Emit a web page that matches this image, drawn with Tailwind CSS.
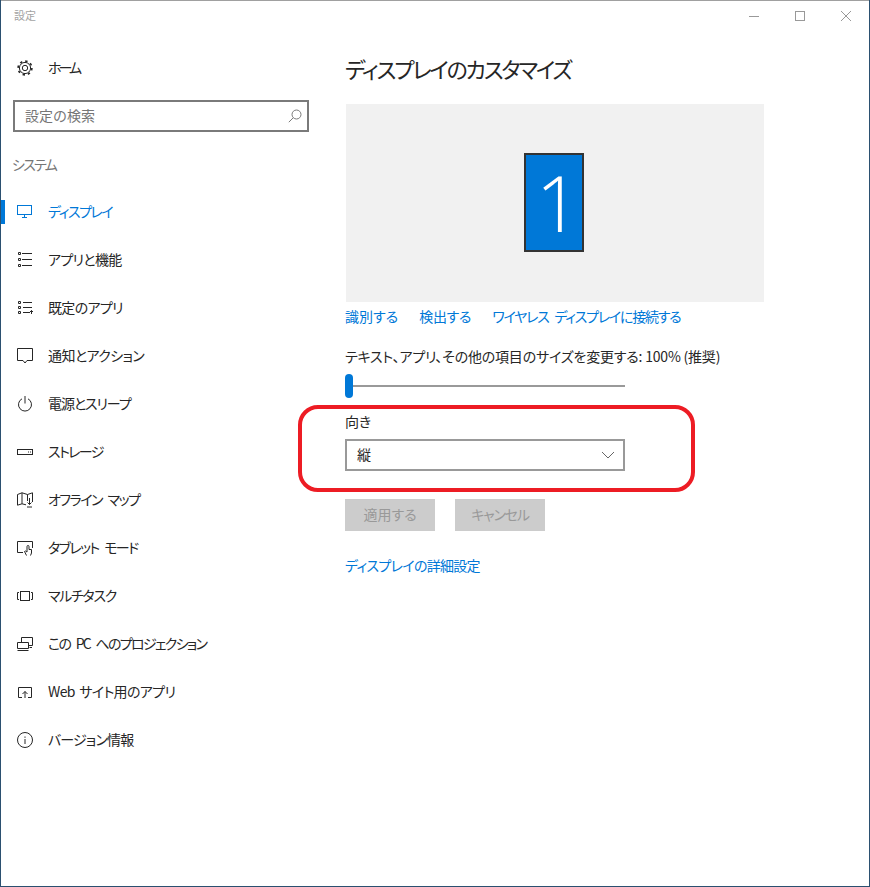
<!DOCTYPE html>
<html lang="ja">
<head>
  <meta charset="UTF-8" />
  <meta name="viewport" content="width=device-width, initial-scale=1.0" />
  <title>設定</title>
  <script src="https://cdn.jsdelivr.net/npm/@tailwindcss/browser@4"></script>
</head>
<body class="bg-white text-[#262626] font-['Noto_Sans_CJK_JP','Noto_Sans',sans-serif] [font-feature-settings:'palt'] text-[14px]">
  <div class="relative w-[870px] h-[887px] overflow-hidden border-x border-b border-[#2b5070] border-t-0">
    <div class="absolute top-0 inset-x-0 h-px bg-[#a0a0a0]"></div>

    <!-- Title bar -->
    <header class="h-8 flex items-start justify-between">
      <span class="ml-[13px] mt-[6px] text-[11px] leading-[18px] text-[#a3a3a3]">設定</span>
      <div class="flex text-[#999]">
        <div class="w-[46px] h-8 flex items-center justify-center">
          <svg width="10" height="10" viewBox="0 0 10 10" fill="none" stroke="currentColor"><path d="M0 5.5H10"/></svg>
        </div>
        <div class="w-[46px] h-8 flex items-center justify-center">
          <svg width="10" height="10" viewBox="0 0 10 10" fill="none" stroke="currentColor"><rect x=".5" y=".5" width="9" height="9"/></svg>
        </div>
        <div class="w-[46px] h-8 flex items-center justify-center">
          <svg width="10" height="10" viewBox="0 0 10 10" fill="none" stroke="currentColor"><path d="M0 0L10 10M10 0L0 10"/></svg>
        </div>
      </div>
    </header>

    <div class="flex">
      <!-- Sidebar -->
      <aside class="w-[344px] shrink-0">
        <a class="mt-3 h-12 flex items-center">
          <svg class="ml-4 mr-[15px]" width="16" height="16" viewBox="0 0 16 16" fill="none" stroke="currentColor"><circle cx="8" cy="8" r="2.7"/><circle cx="8" cy="8" r="5.6"/><circle cx="8" cy="8" r="6.9" stroke-width="1.6" stroke-dasharray="2.4 3.02"/></svg>
          <span class="pb-[2px] tracking-[-3px]">ホーム</span>
        </a>

        <div class="ml-3 mt-2 w-[296px] h-8 border-2 border-[#7a7a7a] flex items-center justify-between pl-[10px] pr-[5px]">
          <span class="pb-[2px] text-[#767676] [font-feature-settings:normal]">設定の検索</span>
          <svg width="14" height="14" viewBox="0 0 14 14" fill="none" stroke="#7a7a7a"><circle cx="8.5" cy="5.5" r="4.5"/><path d="M5.2 8.8L.8 13.2"/></svg>
        </div>

        <div class="h-14 pt-[21px] pl-[11px] leading-[22px] text-[#767676] tracking-[-1.7px]">システム</div>

        <nav>
          <a class="relative h-12 flex items-center text-[#0078d7]">
            <span class="absolute left-0 top-3 w-1 h-6 bg-[#0078d7]"></span>
            <svg class="ml-4 mr-[15px]" width="16" height="16" viewBox="0 0 16 16" fill="none" stroke="currentColor"><rect x=".5" y="1.5" width="14" height="9"/><path d="M7.5 10.5V13M5 13.5H10"/></svg>
            <span class="pb-[2px] tracking-[-1.5px]">ディスプレイ</span>
          </a>
          <a class="h-12 flex items-center">
            <svg class="ml-4 mr-[15px]" width="16" height="16" viewBox="0 0 16 16" fill="none" stroke="currentColor"><path d="M1.5 .5h2v2h-2zM1.5 6.5h2v2h-2zM1.5 12.5h2v2h-2zM5 1.5H15M5 7.5H15M5 13.5H15"/></svg>
            <span class="pb-[2px] tracking-[-.7px]">アプリと機能</span>
          </a>
          <a class="h-12 flex items-center">
            <svg class="ml-4 mr-[15px]" width="16" height="16" viewBox="0 0 16 16" fill="none" stroke="currentColor"><path d="M1.5 1.5h2v2h-2zM1.5 6.5h2v2h-2zM1.5 11.5h2v2h-2zM6 2.5H15M6 7.5H15M6 12.5H13M14.5 14V10.5M13 12L14.5 10.5L16 12"/></svg>
            <span class="pb-[2px] tracking-[-.7px]">既定のアプリ</span>
          </a>
          <a class="h-12 flex items-center">
            <svg class="ml-4 mr-[15px]" width="16" height="16" viewBox="0 0 16 16" fill="none" stroke="currentColor"><path d="M.5 .5H15.5V12.5H10L8 15L6 12.5H.5Z"/></svg>
            <span class="pb-[2px] tracking-[-.6px]">通知とアクション</span>
          </a>
          <a class="h-12 flex items-center">
            <svg class="ml-4 mr-[15px]" width="16" height="16" viewBox="0 0 16 16" fill="none" stroke="currentColor"><path d="M5 2.8A6.5 6.5 0 1 0 11 2.8M8 0V7.5"/></svg>
            <span class="pb-[2px] tracking-[-1.1px]">電源とスリープ</span>
          </a>
          <a class="h-12 flex items-center">
            <svg class="ml-4 mr-[15px]" width="16" height="16" viewBox="0 0 16 16" fill="none" stroke="currentColor"><rect x=".5" y="5.5" width="15" height="5"/><path d="M11 8H12M13 8H14"/></svg>
            <span class="pb-[2px] tracking-[-1.6px]">ストレージ</span>
          </a>
          <a class="h-12 flex items-center">
            <svg class="ml-4 mr-[15px]" width="16" height="16" viewBox="0 0 16 16" fill="none" stroke="currentColor"><path d="M.5 2.5L5 .8L10.5 2.5L15.5 .8V10M.5 2.5V13.2L5 11.8L9 12.8M5 .8V11.8M10.5 2.5V9M12.5 6V12.5M10.5 10.5L12.5 12.5L14.5 10.5M10 15H15"/></svg>
            <span class="pb-[2px] tracking-[-1.5px] [word-spacing:4px]">オフライン マップ</span>
          </a>
          <a class="h-12 flex items-center">
            <svg class="ml-4 mr-[15px]" width="16" height="16" viewBox="0 0 16 16" fill="none" stroke="currentColor"><path d="M6 12.5H.5V1.5H15.5V8M9.5 15.5L7.5 11.5L8.5 11L10 12V6.5A1 1 0 0 1 12 6.5V9.5H14.5V13L13.5 15.5"/></svg>
            <span class="pb-[2px] tracking-[-1.6px] [word-spacing:4px]">タブレット モード</span>
          </a>
          <a class="h-12 flex items-center">
            <svg class="ml-4 mr-[15px]" width="16" height="16" viewBox="0 0 16 16" fill="none" stroke="currentColor"><rect x="3.5" y="3.5" width="9" height="9"/><path d="M2 4.5H.5V11.5H2M14 4.5H15.5V11.5H14"/></svg>
            <span class="pb-[2px] tracking-[-1.3px]">マルチタスク</span>
          </a>
          <a class="h-12 flex items-center">
            <svg class="ml-4 mr-[15px]" width="16" height="16" viewBox="0 0 16 16" fill="none" stroke="currentColor"><path d="M4.5 6V1.5H15.5V9.5H11.5M.5 12.5V6.5H11.5V12.5ZM.5 14.5H11.5M12.5 11.5H15"/></svg>
            <span class="pb-[2px] tracking-[-1.7px] [word-spacing:4px]">この PC へのプロジェクション</span>
          </a>
          <a class="h-12 flex items-center">
            <svg class="ml-4 mr-[15px]" width="16" height="16" viewBox="0 0 16 16" fill="none" stroke="currentColor"><path d="M5 13.5H1.5V3.5H14.5V13.5H11M8 14V7.5M5.5 10L8 7.5L10.5 10"/></svg>
            <span class="pb-[2px] tracking-[-.65px] [word-spacing:2px]">Web サイト用のアプリ</span>
          </a>
          <a class="h-12 flex items-center">
            <svg class="ml-4 mr-[15px]" width="16" height="16" viewBox="0 0 16 16" fill="none" stroke="currentColor"><circle cx="8" cy="8" r="7.5"/><path d="M8 7V12M8 4.5V5.8"/></svg>
            <span class="pb-[2px] tracking-[-.85px]">バージョン情報</span>
          </a>
        </nav>
      </aside>

      <!-- Main -->
      <main class="w-[420px]">
        <h1 class="mt-[18px] h-9 text-[22px] leading-9 font-normal tracking-[-2.2px]">ディスプレイのカスタマイズ</h1>

        <div class="mt-[18px] ml-px w-[418px] h-[198px] bg-[#f1f1f1] flex items-center justify-center">
          <div class="w-[60px] h-[99px] mb-px mr-[2px] pl-2 pb-[2px] border-2 border-[#333] bg-[#0078d7] flex items-center justify-center text-white font-['Open_Sans',sans-serif] font-light text-[78px] leading-none">1</div>
        </div>

        <div class="mt-1 h-[20px] flex leading-[20px] text-[#0078d7]">
          <a>識別する</a><a class="ml-[21px] tracking-[-.3px]">検出する</a><a class="ml-[21px] tracking-[-1.25px] [word-spacing:4px]">ワイヤレス ディスプレイに接続する</a>
        </div>

        <p class="mt-[20px] h-[20px] leading-[20px] tracking-[-.2px]">テキスト、アプリ、その他の項目のサイズを変更する: 100% (推奨)</p>

        <div class="relative mt-2 w-[280px] h-6 flex items-center">
          <div class="w-full h-0.5 bg-[#999]"></div>
          <div class="absolute left-0 top-0 w-2 h-6 rounded-full bg-[#0078d7]"></div>
        </div>

        <p class="mt-[13px] h-[20px] leading-[20px]">向き</p>
        <div class="mt-2 w-[280px] h-8 border-2 border-[#999] flex items-center justify-between pl-[10px] pr-2">
          <span class="pb-[2px]">縦</span>
          <svg width="14" height="8" viewBox="0 0 14 8" fill="none" stroke="#666"><path d="M1 1L7 7L13 1"/></svg>
        </div>

        <div class="mt-7 flex gap-5">
          <button class="w-[90px] h-8 pb-[2px] bg-[#ccc] text-[#999]">適用する</button>
          <button class="w-[90px] h-8 pb-[2px] bg-[#ccc] text-[#999] tracking-[-1.2px]">キャンセル</button>
        </div>

        <a class="block mt-6 leading-[20px] text-[#0078d7] tracking-[-.7px]">ディスプレイの詳細設定</a>
      </main>
    </div>

    <!-- Red annotation -->
    <div class="absolute left-[297px] top-[405px] w-[397px] h-[87px] border-4 border-[#ed1c24] rounded-[20px]"></div>
  </div>
</body>
</html>
